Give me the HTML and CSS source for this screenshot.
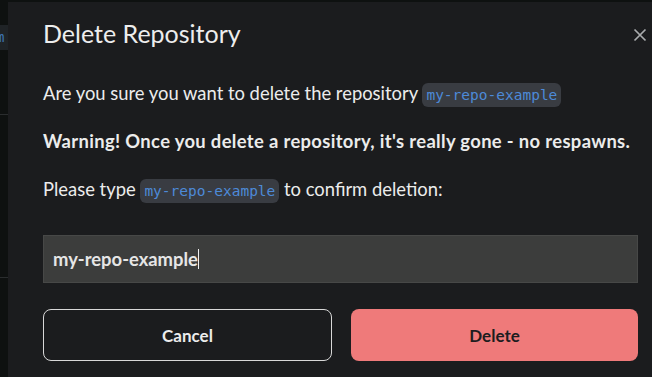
FILE: index.html
```html
<!DOCTYPE html>
<html lang="en">
<head>
    <meta charset="UTF-8" />
    <meta name="viewport" content="width=device-width, initial-scale=1.0" />
    <title>Delete Repository</title>
    <link rel="stylesheet" href="styles.css">
</head>
<body>
    <div class="page">
        <div class="side">
            <div class="side-tab">m</div>
            <div class="side-line line-one"></div>
            <div class="side-line line-two"></div>
        </div>
        <div class="modal">
            <div class="modal-head">
                <h2>Delete Repository</h2>
                <button class="close-btn" aria-label="Close">
                    <svg width="14" height="14" viewBox="0 0 14 14">
                        <path d="M1.5 1.5 L12.5 12.5 M12.5 1.5 L1.5 12.5" stroke="#a9abad" stroke-width="1.7" />
                    </svg>
                </button>
            </div>
            <p class="line first">Are you sure you want to delete the repository <code>my-repo-example</code></p>
            <p class="line warning">Warning! Once you delete a repository, it's really gone - no respawns.</p>
            <p class="line">Please type <code>my-repo-example</code> to confirm deletion:</p>
            <div class="confirm-input">my-repo-example<span class="caret"></span></div>
            <div class="actions">
                <button class="btn cancel-btn">Cancel</button>
                <button class="btn delete-btn">Delete</button>
            </div>
        </div>
    </div>
</body>
</html>
```

FILE: styles.css
```css
body {
    margin: 0;
    padding: 0;
    font-family: Lato, "Open Sans", sans-serif;
    background-color: #0e1110;
    color: #ececec;
}
.page {
    display: flex;
    height: 377px;
    overflow: hidden;
}
.side {
    width: 8px;
    flex-shrink: 0;
    position: relative;
}
.side-tab {
    margin-top: 25px;
    height: 25px;
    background-color: #1f2326;
    color: #3d76b8;
    font-family: "DejaVu Sans Mono", monospace;
    font-size: 14px;
    line-height: 25px;
    text-indent: -4px;
    overflow: hidden;
}
.side-line {
    position: absolute;
    left: 0;
    width: 8px;
    height: 1px;
    background-color: #2a2d2e;
}
.line-one { top: 114px; }
.line-two { top: 277px; }
.modal {
    flex: 1;
    margin-top: 2px;
    background-color: #1b1c1e;
    padding: 13px 14px 0 35px;
}
.modal-head {
    display: flex;
    justify-content: space-between;
    align-items: center;
    margin-bottom: 29px;
}
.modal-head h2 {
    margin: 0;
    font-size: 25px;
    font-weight: 400;
    line-height: 36px;
    color: #ededed;
}
.close-btn {
    background: none;
    border: none;
    padding: 0;
    margin-right: -9px;
    margin-top: 4px;
    cursor: pointer;
    display: flex;
}
.line {
    margin: 0 0 22px 0;
    font-size: 18.4px;
    line-height: 26px;
}
.line.first {
    margin-bottom: 20px;
}
.warning {
    font-weight: 700;
    letter-spacing: 0.35px;
}
code {
    font-family: "DejaVu Sans Mono", monospace;
    font-size: 14.5px;
    letter-spacing: 0;
    color: #4d8ad8;
    background-color: #393c42;
    padding: 4px 4px;
    border-radius: 6px;
}
.confirm-input {
    margin-top: 31px;
    height: 46px;
    background-color: #3c3d3c;
    border: 1px solid #474847;
    padding: 0 9px;
    display: flex;
    align-items: center;
    font-size: 18.4px;
    font-weight: 700;
    color: #e6e6e6;
}
.caret {
    display: inline-block;
    width: 1px;
    height: 20px;
    background-color: #f0f0f0;
}
.actions {
    display: flex;
    gap: 19px;
    margin-top: 26px;
}
.btn {
    flex: 1;
    height: 52px;
    border-radius: 8px;
    font-family: Lato, sans-serif;
    font-size: 17px;
    font-weight: 700;
    cursor: pointer;
}
.cancel-btn {
    background-color: transparent;
    border: 1px solid #d8d8d8;
    color: #ececec;
}
.delete-btn {
    background-color: #ef7a7a;
    border: none;
    color: #1d1d1f;
}
```
